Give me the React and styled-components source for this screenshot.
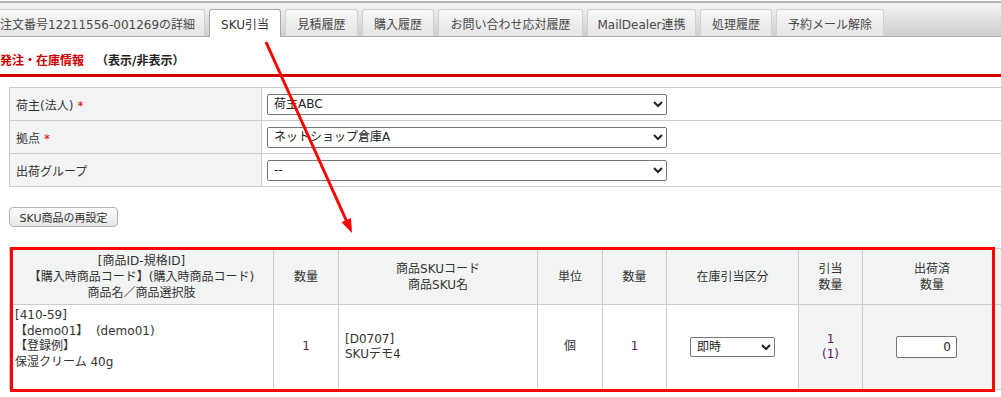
import React from 'react';
import styled, { createGlobalStyle } from 'styled-components';

const Global = createGlobalStyle`
  html, body { margin: 0; padding: 0; background: #fff; overflow: hidden; }
  body {
    font-family: "DejaVu Sans", "Noto Sans CJK JP", sans-serif;
    font-size: 12px;
    color: #333;
    text-spacing-trim: space-all;
  }
  * { box-sizing: border-box; }
`;

const Page = styled.div`
  position: relative;
  width: 1001px;
  height: 397px;
  overflow: hidden;
`;

const TabBar = styled.div`
  margin-top: 1px;
  height: 36px;
  border-top: 2px solid #b2b2b2;
  border-bottom: 1px solid #a9a9a9;
  background: linear-gradient(#f4f4f4, #cfcfcf);
  display: flex;
  align-items: flex-end;
  gap: 4px;
  margin-left: -10px;
`;

const Tab = styled.div`
  width: ${p => p.$w}px;
  height: ${p => (p.$active ? 28 : 27)}px;
  margin-bottom: ${p => (p.$active ? -1 : 0)}px;
  border: 1px solid ${p => (p.$active ? '#a9a9a9' : '#d0d0d0')};
  border-bottom: none;
  border-radius: 3px 3px 0 0;
  background: ${p => (p.$active ? '#fff' : 'linear-gradient(#f7f7f7, #e5e5e5)')};
  display: flex;
  align-items: center;
  justify-content: center;
  padding-bottom: ${p => (p.$active ? 1 : 0)}px;
  font-size: 12px;
  color: ${p => (p.$active ? '#333' : '#4a4a4a')};
  white-space: nowrap;
`;

const SectionHead = styled.div`
  padding-top: 15px;
  padding-bottom: 4px;
  line-height: 18px;
  font-size: 12px;
  font-weight: bold;
  color: #222;
  border-bottom: 3px solid #d20000;
`;

const RedTitle = styled.span`
  color: #cc0000;
`;

const FormTable = styled.table`
  margin: 10px 0 0 9px;
  width: 1000px;
  border-collapse: collapse;
  table-layout: fixed;
`;

const FormRow = styled.tr`
  height: 33px;
`;

const Label = styled.td`
  padding: 0 6px;
  background: #f2f4f4;
  border: 1px solid #cccccc;
  font-size: 12px;
  color: #333;
  vertical-align: middle;
`;

const Value = styled.td`
  padding: 0 5px;
  border-top: 1px solid #cccccc;
  border-bottom: 1px solid #cccccc;
  vertical-align: middle;
`;

const Req = styled.span`
  color: #e00000;
  margin-left: 4px;
`;

const Select = styled.select`
  width: ${p => p.$w}px;
  height: ${p => p.$h}px;
  font-family: inherit;
  font-size: 12px;
  color: #222;
  background: #fff;
  border: 1px solid #767676;
  border-radius: 2px;
  padding: 0 2px;
  display: block;
  margin: ${p => (p.$center ? '0 auto' : '0')};
`;

const ButtonRow = styled.div`
  margin: 20px 0 0 9px;
`;

const Button = styled.button`
  width: 109px;
  height: 20px;
  padding: 0;
  font-family: inherit;
  font-size: 11px;
  color: #333;
  border: 1px solid #b4b4b4;
  border-radius: 4px;
  background: linear-gradient(#fdfdfd, #e6e6e6);
`;

const GridTable = styled.table`
  margin: 21px 0 0 9px;
  width: 992px;
  border-collapse: collapse;
  table-layout: fixed;
`;

const HeadRow = styled.tr`
  height: 56px;
`;

const BodyRow = styled.tr`
  height: 85px;
`;

const Th = styled.th`
  background: #f2f4f4;
  border: 1px solid #cccccc;
  font-weight: normal;
  font-size: 12px;
  line-height: 16px;
  color: #333;
  text-align: center;
  vertical-align: middle;
  padding: 0;
`;

const Td = styled.td`
  background: ${p => p.$bg || '#fff'};
  border: 1px solid #cccccc;
  font-size: 12px;
  line-height: 15.5px;
  color: ${p => p.$color || '#333'};
  text-align: ${p => p.$align || 'center'};
  vertical-align: ${p => p.$valign || 'middle'};
  padding: ${p => p.$pad || '0'};
`;

const NumInput = styled.input`
  width: 61px;
  height: 22px;
  font-family: inherit;
  font-size: 12px;
  color: #222;
  text-align: right;
  padding: 0 5px;
  border: 1px solid #767676;
  border-radius: 2px;
  background: #fff;
`;

const Highlight = styled.div`
  position: absolute;
  left: 10px;
  top: 247px;
  width: 985px;
  height: 145px;
  border: 3px solid #ff0000;
  pointer-events: none;
`;

const ArrowLayer = styled.svg`
  position: absolute;
  left: 0;
  top: 0;
  pointer-events: none;
`;

const tabs = [
  { label: '注文番号12211556-001269の詳細', w: 215 },
  { label: 'SKU引当', w: 72, active: true },
  { label: '見積履歴', w: 73 },
  { label: '購入履歴', w: 72 },
  { label: 'お問い合わせ応対履歴', w: 145 },
  { label: 'MailDealer連携', w: 109 },
  { label: '処理履歴', w: 72 },
  { label: '予約メール解除', w: 108 },
];

const cols = [264, 65, 199, 65, 64, 132, 64, 139];

export default function App() {
  return (
    <Page>
      <Global />
      <TabBar>
        {tabs.map(t => (
          <Tab key={t.label} $w={t.w} $active={t.active}>{t.label}</Tab>
        ))}
      </TabBar>

      <SectionHead>
        <RedTitle>発注・在庫情報</RedTitle>　（表示/非表示）
      </SectionHead>

      <FormTable>
        <colgroup>
          <col style={{ width: 252 }} />
          <col />
        </colgroup>
        <tbody>
          <FormRow>
            <Label>荷主(法人)<Req>*</Req></Label>
            <Value>
              <Select $w={400} $h={21} defaultValue="a">
                <option value="a">荷主ABC</option>
              </Select>
            </Value>
          </FormRow>
          <FormRow>
            <Label>拠点<Req>*</Req></Label>
            <Value>
              <Select $w={400} $h={21} defaultValue="a">
                <option value="a">ネットショップ倉庫A</option>
              </Select>
            </Value>
          </FormRow>
          <FormRow>
            <Label>出荷グループ</Label>
            <Value>
              <Select $w={400} $h={21} defaultValue="a">
                <option value="a">--</option>
              </Select>
            </Value>
          </FormRow>
        </tbody>
      </FormTable>

      <ButtonRow>
        <Button type="button">SKU商品の再設定</Button>
      </ButtonRow>

      <GridTable>
        <colgroup>
          {cols.map((w, i) => <col key={i} style={{ width: w }} />)}
        </colgroup>
        <thead>
          <HeadRow>
            <Th>[商品ID-規格ID]<br />【購入時商品コード】(購入時商品コード)<br />商品名／商品選択肢</Th>
            <Th>数量</Th>
            <Th>商品SKUコード<br />商品SKU名</Th>
            <Th>単位</Th>
            <Th>数量</Th>
            <Th>在庫引当区分</Th>
            <Th>引当<br />数量</Th>
            <Th>出荷済<br />数量</Th>
          </HeadRow>
        </thead>
        <tbody>
          <BodyRow>
            <Td $align="left" $valign="top" $pad="3px 4px 0 5px">
              [410-59]<br />
              【demo01】&nbsp;&nbsp;(demo01)<br />
              【登録例】<br />
              保湿クリーム 40g
            </Td>
            <Td $color="#602060">1</Td>
            <Td $align="left" $pad="0 0 0 6px">[D0707]<br />SKUデモ4</Td>
            <Td>個</Td>
            <Td $color="#602060">1</Td>
            <Td>
              <Select $w={85} $h={20} $center defaultValue="a">
                <option value="a">即時</option>
              </Select>
            </Td>
            <Td $bg="#f2f4f4" $color="#602060">1<br />(1)</Td>
            <Td $bg="#f2f4f4" $align="left" $pad="0 0 0 33px">
              <NumInput defaultValue="0" />
            </Td>
          </BodyRow>
        </tbody>
      </GridTable>

      <Highlight />
      <ArrowLayer width="1001" height="397" viewBox="0 0 1001 397">
        <line x1="266" y1="42" x2="347" y2="222" stroke="#ff0000" strokeWidth="3" />
        <polygon points="352,233 351,218 341.5,222.2" fill="#ff0000" />
      </ArrowLayer>
    </Page>
  );
}
